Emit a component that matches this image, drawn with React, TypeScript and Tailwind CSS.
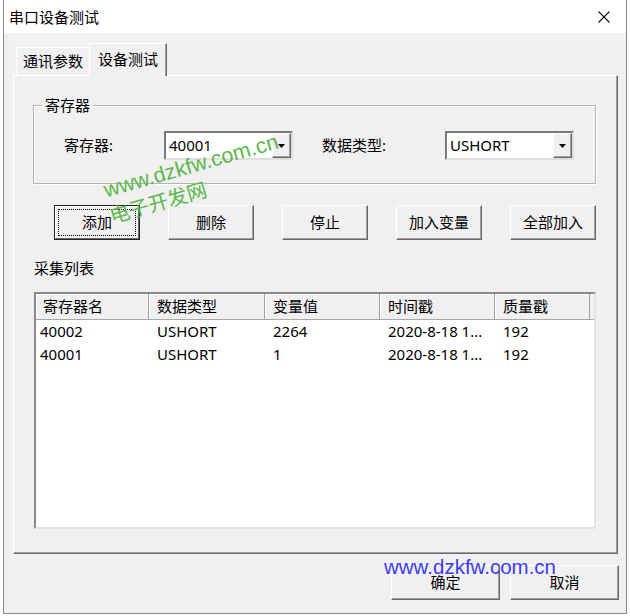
import { ReactNode } from "react";

interface BtnProps {
  children: ReactNode;
  focused?: boolean;
  className?: string;
}

const Btn = ({ children, focused, className = "" }: BtnProps) => {
  if (focused) {
    return (
      <div className={`flex h-[35px] border border-[#222] ${className}`}>
        <div className="flex flex-1 border border-t-white border-l-white border-r-[#696969] border-b-[#696969] bg-[#f0f0f0] p-[2px]">
          <div className="flex flex-1 items-center justify-center border border-dotted border-black">{children}</div>
        </div>
      </div>
    );
  }
  return (
    <div
      className={`flex h-[35px] items-center justify-center border border-t-white border-l-white border-r-[#696969] border-b-[#696969] bg-[#f0f0f0] shadow-[inset_-1px_-1px_0_#a0a0a0] ${className}`}
    >
      {children}
    </div>
  );
};

const Combo = ({ value }: { value: string }) => (
  <div className="flex h-[29px] w-[129px] border-2 border-t-[#7a7a7a] border-l-[#7a7a7a] border-r-[#dedede] border-b-[#dedede] bg-white">
    <span className="flex-1 pl-[3px] leading-[25px]">{value}</span>
    <span className="flex w-[19px] items-center justify-center border border-t-white border-l-white border-r-[#696969] border-b-[#696969] bg-[#f0f0f0] shadow-[inset_-1px_-1px_0_#a0a0a0]">
      <svg width="8" height="4" viewBox="0 0 8 4">
        <path d="M0 0h7L3.5 4z" fill="#000" />
      </svg>
    </span>
  </div>
);

const cols = ["寄存器名", "数据类型", "变量值", "时间戳", "质量戳"];
const widths = ["w-[113px]", "w-[116px]", "w-[115px]", "w-[115px]", "w-[95px]"];
const rows = [
  ["40002", "USHORT", "2264", "2020-8-18 1...", "192"],
  ["40001", "USHORT", "1", "2020-8-18 1...", "192"],
];

export default function App() {
  return (
    <div className="relative h-[616px] w-[630px] overflow-hidden bg-white font-[Noto_Sans,Noto_Sans_CJK_SC,sans-serif] text-[15px] text-black">
      <div className="ml-[3px] flex h-[614px] w-[624px] flex-col border-x border-b border-[#8a8a8a] bg-[#f0f0f0]">
        {/* title bar */}
        <div className="flex h-[33px] items-center justify-between bg-white pl-[5px] pr-[16px]">
          <span className="leading-[20px]">串口设备测试</span>
          <svg width="12" height="12" viewBox="0 0 12 12">
            <path d="M0.5 0.5l11 11M11.5 0.5l-11 11" stroke="#111" strokeWidth="1.1" />
          </svg>
        </div>

        {/* tabs */}
        <div className="mt-[10px] ml-[12px] flex h-[32px] items-end">
          <div className="flex h-[28px] w-[73px] items-center justify-center border-t border-l border-white">通讯参数</div>
          <div className="relative z-10 -mb-px flex h-[33px] w-[78px] items-start justify-center border-t border-l border-r border-t-white border-l-white border-r-[#696969] bg-[#f0f0f0] pt-[4px] shadow-[inset_-1px_0_0_#a0a0a0]">
            设备测试
          </div>
        </div>

        {/* panel */}
        <div className="ml-[9px] flex h-[479px] w-[605px] flex-col border border-t-white border-l-white border-r-[#696969] border-b-[#696969] pt-[19px] pl-[19px] pr-[21px] shadow-[inset_-1px_-1px_0_#a0a0a0]">
          <fieldset className="h-[89px] border border-[#b4b4b4] shadow-[1px_1px_0_#fff,inset_1px_1px_0_#fff]">
            <legend className="ml-[8px] px-[3px] leading-[20px]">寄存器</legend>
            <div className="mt-[16px] flex items-center pl-[30px]">
              <span className="w-[100px]">寄存器:</span>
              <Combo value="40001" />
              <span className="ml-[29px] w-[123px]">数据类型:</span>
              <Combo value="USHORT" />
            </div>
          </fieldset>

          <div className="mt-[21px] ml-[21px] flex gap-[28px]">
            <Btn focused className="w-[86px]">添加</Btn>
            <Btn className="w-[86px]">删除</Btn>
            <Btn className="w-[86px]">停止</Btn>
            <Btn className="w-[86px]">加入变量</Btn>
            <Btn className="w-[86px]">全部加入</Btn>
          </div>

          <div className="mt-[18px] ml-[1px] leading-[20px]">采集列表</div>

          <div className="mt-[14px] ml-[1px] flex h-[237px] w-[562px] flex-col border-2 border-t-[#8a8a8a] border-l-[#8a8a8a] border-r-[#e3e3e3] border-b-[#e3e3e3] bg-white">
            <div className="flex h-[26px] border-b border-[#a8a8a8] bg-[#f0f0f0]">
              {cols.map((c, i) => (
                <div
                  key={c}
                  className={`${widths[i]} flex items-center border-r border-[#a0a0a0] shadow-[inset_1px_1px_0_#fff] ${i === 0 ? "pl-[7px]" : "pl-[8px]"}`}
                >
                  {c}
                </div>
              ))}
              <div className="flex-1" />
            </div>
            {rows.map((r) => (
              <div key={r[0]} className="flex h-[23px] items-center">
                {r.map((v, i) => (
                  <div key={i} className={`${widths[i]} whitespace-nowrap ${i === 0 ? "pl-[4px]" : "pl-[8px]"}`}>
                    {v}
                  </div>
                ))}
              </div>
            ))}
          </div>
        </div>

        {/* dialog buttons */}
        <div className="mt-[11px] flex justify-end gap-[10px] pr-[7px]">
          <Btn className="w-[109px]">确定</Btn>
          <Btn className="w-[109px]">取消</Btn>
        </div>
      </div>

      {/* watermarks */}
      <div className="absolute top-[155px] left-[100px] w-[182px] -rotate-[16deg] whitespace-nowrap text-center font-[Liberation_Sans,Arial,sans-serif] text-[21.5px] leading-[22px] text-[#5cb84c]">
        www.dzkfw.com.cn
      </div>
      <div className="absolute top-[192px] left-[108px] w-[100px] -rotate-[16deg] whitespace-nowrap text-center font-[Noto_Sans_CJK_SC,sans-serif] text-[20px] leading-[20px] text-[#5cb84c]">
        电子开发网
      </div>
      <div className="absolute top-[556px] left-[384px] whitespace-nowrap font-[Liberation_Sans,Arial,sans-serif] text-[20.5px] leading-[22px] text-[#3c3cf5]">
        www.dzkfw.com.cn
      </div>
    </div>
  );
}
